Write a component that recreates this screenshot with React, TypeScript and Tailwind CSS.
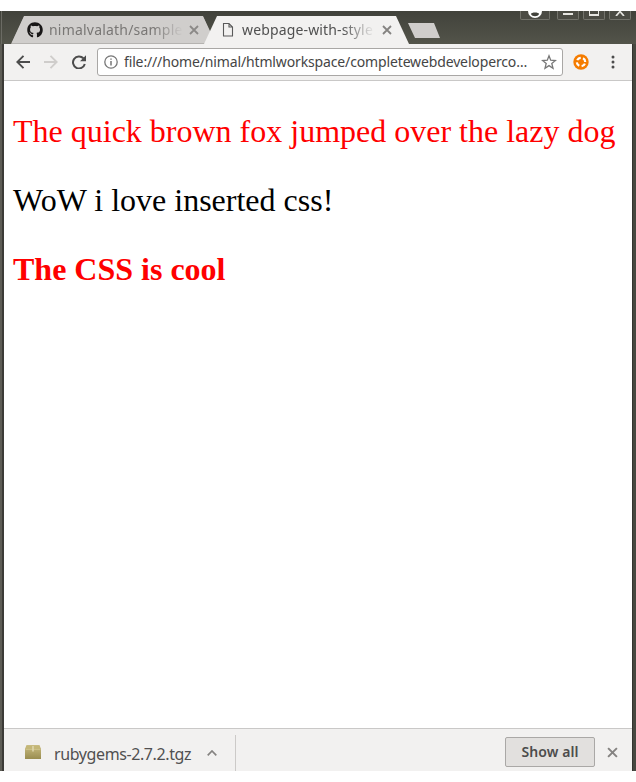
import React from "react";
import { FaGithub } from "react-icons/fa";

const ui = "font-['Noto_Sans',sans-serif]";

function CloseIcon({ className }: { className: string }) {
  return (
    <svg viewBox="0 0 10 10" className={className} fill="none" stroke="currentColor" strokeWidth="1.8">
      <path d="M1 1l8 8M9 1L1 9" />
    </svg>
  );
}

function WindowButton({ wide, children }: { wide?: boolean; children: React.ReactNode }) {
  return (
    <div
      className={`${wide ? "w-[30px] mr-[7px]" : "w-[22px] mr-1"} flex h-[9px] shrink-0 justify-center overflow-hidden rounded-b-[2px] border border-t-0 border-[#73736c] bg-[#4b4b44]`}
    >
      {children}
    </div>
  );
}

function TabStrip() {
  return (
    <div className="flex h-[33px] items-start bg-gradient-to-b from-[#41423b] to-[#53544a]">
      <div className="h-full w-[2px] shrink-0 border-r border-[#6b6b64]" />
      <div className="relative ml-[9px] mt-[5px] h-7 w-[205px] shrink-0 bg-[#b5b3b0] [clip-path:polygon(13px_0,192px_0,205px_28px,0_28px)]">
        <div className="flex h-[27px] w-[205px] items-center bg-[#d0cecc] pl-4 [clip-path:polygon(13px_0,192px_0,205px_28px,0_28px)]">
          <FaGithub className="size-4 shrink-0 text-[#191717]" />
          <div className={`${ui} ml-[6px] w-[134px] overflow-hidden whitespace-nowrap text-[14px] tracking-[0.2px] text-[#797775] [mask-image:linear-gradient(to_right,#000_78%,transparent)]`}>
            nimalvalath/sample
          </div>
          <CloseIcon className="ml-[6px] size-[10px] shrink-0 text-[#8b8987]" />
        </div>
      </div>
      <div className="relative -ml-3 mt-[5px] flex h-7 w-[205px] shrink-0 items-center bg-[#f2f1f0] pb-px pl-[18px] [clip-path:polygon(13px_0,192px_0,205px_28px,0_28px)]">
        <svg viewBox="0 0 12 16" className="mt-px h-4 w-3 shrink-0" fill="none" stroke="#5a5a5a" strokeWidth="1.1">
          <path d="M1.5 1.5h5.5l3.5 3.5v9h-9zM7 1.5v3.5h3.5" />
        </svg>
        <div className={`${ui} ml-[8px] w-[133px] overflow-hidden whitespace-nowrap text-[14px] tracking-[0.15px] text-[#505050] [mask-image:linear-gradient(to_right,#000_75%,transparent)]`}>
          webpage-with-style
        </div>
        <CloseIcon className="ml-[7px] size-[10px] shrink-0 text-[#858381]" />
      </div>
      <div className="-ml-px mt-3 h-[15px] w-8 shrink-0 bg-[#cfcdcb] [clip-path:polygon(0_0,26px_0,32px_15px,7px_15px)]" />
      <div className="ml-20 flex">
        <WindowButton wide>
          <svg viewBox="0 0 16 8" className="h-2 w-4">
            <path d="M1 0a7 7 0 0014 0z" fill="#fff" />
            <path d="M4 3c0-2 8-2 8 0-1 3-7 3-8 0" fill="#41423b" />
          </svg>
        </WindowButton>
        <WindowButton>
          <div className="mt-[2px] h-[2px] w-[10px] bg-[#e6e5e1]" />
        </WindowButton>
        <WindowButton>
          <div className="h-[5px] w-[10px] border-2 border-t-0 border-x-[1.5px] border-[#e6e5e1]" />
        </WindowButton>
        <WindowButton>
          <svg viewBox="0 0 10 5" className="h-[5px] w-[10px]" fill="none" stroke="#e6e5e1" strokeWidth="1.7">
            <path d="M1 5l4-4.5L9 5" />
          </svg>
        </WindowButton>
      </div>
    </div>
  );
}

function Toolbar() {
  return (
    <div className="flex h-[37px] shrink-0 items-center border-b border-[#c9c8c7] bg-[#f2f1f0] pl-3">
      <svg viewBox="0 0 14 14" className="size-[14px]" fill="none" stroke="#4c4c4c" strokeWidth="1.9">
        <path d="M14 7H1.5M7.5 .8L1.3 7l6.2 6.2" />
      </svg>
      <svg viewBox="0 0 14 14" className="ml-[14px] size-[14px]" fill="none" stroke="#cfcdcb" strokeWidth="1.9">
        <path d="M0 7h12.5M6.5 .8L12.7 7l-6.2 6.2" />
      </svg>
      <svg viewBox="0 0 14 14" className="ml-[14px] size-[14px]">
        <path d="M11.4 3.3A6 6 0 1012.8 9" fill="none" stroke="#4c4c4c" strokeWidth="2" />
        <path d="M14 .2v6H8z" fill="#4c4c4c" />
      </svg>
      <div className="ml-[11px] flex h-7 w-[466px] items-center rounded-[3px] border border-[#a9a7a5] bg-white pl-[6px]">
        <svg viewBox="0 0 14 14" className="size-[14px] shrink-0" fill="none" stroke="#777" strokeWidth="1.3">
          <circle cx="7" cy="7" r="6.2" />
          <path d="M7 6v4.5M7 3.4v1.4" strokeWidth="1.5" />
        </svg>
        <div className={`${ui} ml-[6px] w-[410px] whitespace-nowrap pb-px text-[14px] tracking-[-0.14px] text-[#454545]`}>
          <span>file:///home/nimal/htmlworkspace/completewebdeveloperco…</span>
        </div>
        <svg viewBox="0 0 16 16" className="ml-[7px] size-4 shrink-0" fill="none" stroke="#777" strokeWidth="1.3">
          <path d="M8 1.8l1.7 4.4 4.8.3-3.7 3 1.2 4.7L8 11.6l-4 2.6 1.2-4.7-3.7-3 4.8-.3z" />
        </svg>
      </div>
      <svg viewBox="0 0 16 16" className="ml-[10px] size-4">
        <circle cx="8" cy="8" r="7.7" fill="#f57c00" />
        <circle cx="8" cy="8" r="4.2" fill="none" stroke="#fff" strokeWidth="2.2" strokeDasharray="4.2 2.4" transform="rotate(22 8 8)" />
      </svg>
      <svg viewBox="0 0 4 14" className="ml-[22px] h-[14px] w-1" fill="#4c4c4c">
        <circle cx="2" cy="2" r="1.5" />
        <circle cx="2" cy="7" r="1.5" />
        <circle cx="2" cy="12" r="1.5" />
      </svg>
    </div>
  );
}

function DownloadShelf() {
  return (
    <div className="flex h-[43px] shrink-0 items-start border-t border-[#c9c8c7] bg-[#f2f1f0]">
      <div className="mt-[6px] flex h-9 w-[232px] items-center border-r border-[#cccac8] pl-[21px]">
        <svg viewBox="0 0 16 14" className="-mt-[2px] h-[14px] w-4 shrink-0">
          <defs>
            <linearGradient id="box" x2="0" y2="1">
              <stop stopColor="#cabd83" />
              <stop offset="1" stopColor="#9a8d50" />
            </linearGradient>
          </defs>
          <path d="M1.5 0h13L16 4v10H0V4z" fill="url(#box)" />
          <path d="M1.5 1h13l1 3.5H.5z" fill="#c4b778" />
          <path d="M.5 4.5h15" stroke="#d8ce9a" strokeWidth=".5" />
          <path d="M7.2 1h1.6v5.5H7.2z" fill="#ded5ac" />
        </svg>
        <div className={`${ui} ml-[13px] w-[139px] whitespace-nowrap pt-[2px] text-[16px] tracking-[-0.4px] text-[#505050]`}>
          <span>rubygems-2.7.2.tgz</span>
        </div>
        <svg viewBox="0 0 10 6" className="ml-[14px] h-[6px] w-[10px]" fill="none" stroke="#858381" strokeWidth="1.7">
          <path d="M.7 5.3L5 1l4.3 4.3" />
        </svg>
      </div>
      <button className={`${ui} ml-[269px] mt-2 h-[30px] w-[90px] rounded-[2px] border border-[#aaa8a6] bg-[#e2e0de] pb-0.5 text-[14px] font-semibold tracking-[0.1px] text-[#4c4c4c]`}>
        Show all
      </button>
      <CloseIcon className="ml-3 mt-[18px] size-[11px] text-[#858381]" />
    </div>
  );
}

export default function App() {
  return (
    <div className="h-[782px] w-[636px] overflow-hidden bg-white py-[11px]">
      <div className="flex h-[760px] flex-col">
        <TabStrip />
        <div className="flex min-h-0 flex-1">
          <div className="flex w-1 shrink-0">
            <div className="w-[2px] bg-[#5d5c55]" />
            <div className="w-[2px] bg-[#3c3b37]" />
          </div>
          <div className="flex w-[628px] flex-col">
            <Toolbar />
            <main className="flex-1 px-[9px] pt-8 font-['Liberation_Serif',serif] text-[32px] leading-[37px] text-black">
              <p className="mb-8 whitespace-nowrap text-[#ff0000]">The quick brown fox jumped over the lazy dog</p>
              <p className="mb-8">WoW i love inserted css!</p>
              <p className="font-bold text-[#ff0000]">The CSS is cool</p>
            </main>
            <DownloadShelf />
          </div>
          <div className="w-1 shrink-0 border-l border-[#34342f] bg-[#474840]" />
        </div>
      </div>
    </div>
  );
}
